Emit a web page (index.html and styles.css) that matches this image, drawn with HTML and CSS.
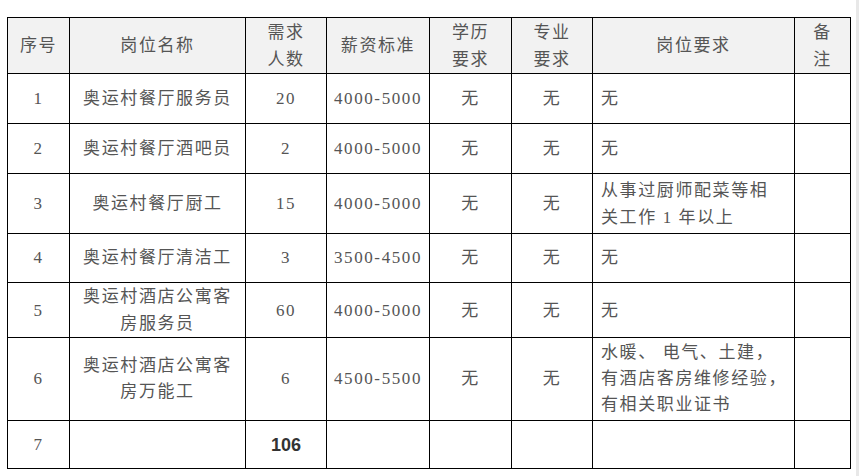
FILE: index.html
```html
<!DOCTYPE html>
<html lang="zh">
<head>
<meta charset="utf-8">
<link rel="stylesheet" href="styles.css">
</head>
<body>
<div class="page">
  <table class="jobs">
    <colgroup>
      <col class="c-no"><col class="c-name"><col class="c-num"><col class="c-pay"><col class="c-edu"><col class="c-major"><col class="c-req"><col class="c-note">
    </colgroup>
    <thead>
      <tr class="r-head">
        <th>序号</th>
        <th>岗位名称</th>
        <th>需求<br>人数</th>
        <th>薪资标准</th>
        <th>学历<br>要求</th>
        <th>专业<br>要求</th>
        <th>岗位要求</th>
        <th>备<br>注</th>
      </tr>
    </thead>
    <tbody>
      <tr class="r1">
        <td>1</td><td>奥运村餐厅服务员</td><td>20</td><td>4000-5000</td><td>无</td><td>无</td><td class="left">无</td><td></td>
      </tr>
      <tr class="r2">
        <td>2</td><td>奥运村餐厅酒吧员</td><td>2</td><td>4000-5000</td><td>无</td><td>无</td><td class="left">无</td><td></td>
      </tr>
      <tr class="r3">
        <td>3</td><td>奥运村餐厅厨工</td><td>15</td><td>4000-5000</td><td>无</td><td>无</td><td class="left">从事过厨师配菜等相<br>关工作 1 年以上</td><td></td>
      </tr>
      <tr class="r4">
        <td>4</td><td>奥运村餐厅清洁工</td><td>3</td><td>3500-4500</td><td>无</td><td>无</td><td class="left">无</td><td></td>
      </tr>
      <tr class="r5">
        <td>5</td><td>奥运村酒店公寓客<br>房服务员</td><td>60</td><td>4000-5000</td><td>无</td><td>无</td><td class="left">无</td><td></td>
      </tr>
      <tr class="r6">
        <td>6</td><td>奥运村酒店公寓客<br>房万能工</td><td>6</td><td>4500-5500</td><td>无</td><td>无</td><td class="left">水暖、 电气、土建，<br>有酒店客房维修经验，<br>有相关职业证书</td><td></td>
      </tr>
      <tr class="r7">
        <td>7</td><td></td><td class="total">106</td><td></td><td></td><td></td><td></td><td></td>
      </tr>
    </tbody>
  </table>
  <div class="edge"></div>
</div>
</body>
</html>
```

FILE: styles.css
```css
html, body {
  margin: 0;
  padding: 0;
  background: #ffffff;
}

.page {
  display: flex;
  align-items: flex-start;
  width: 860px;
  height: 476px;
  padding: 17px 0 0 7px;
  box-sizing: border-box;
}

.edge {
  width: 3px;
  height: 476px;
  margin-top: -17px;
  margin-left: 5px;
  background: #e8e8e8;
}

.jobs {
  border-collapse: collapse;
  table-layout: fixed;
  width: 844px;
  font-family: "Liberation Serif", "Noto Sans CJK SC", serif;
  font-size: 17px;
  line-height: 26px;
  color: #555555;
  letter-spacing: 1.6px;
}

.c-no { width: 62px; }
.c-name { width: 176px; }
.c-num { width: 81px; }
.c-pay { width: 103px; }
.c-edu { width: 82px; }
.c-major { width: 81px; }
.c-req { width: 202px; }
.c-note { width: 56px; }

.jobs th,
.jobs td {
  border: 1px solid #000000;
  padding: 0;
  text-align: center;
  vertical-align: middle;
  font-weight: normal;
  overflow: hidden;
  white-space: nowrap;
}

.jobs th {
  background: #f2f2f2;
  line-height: 27px;
}

.jobs td.left {
  text-align: left;
  padding-left: 8px;
}

.jobs td.total {
  font-family: "Liberation Sans", Arial, sans-serif;
  font-weight: bold;
  font-size: 18px;
  letter-spacing: 0;
  color: #333;
}

.r-head { height: 56px; }
.r1 { height: 50px; }
.r2 { height: 50px; }
.r3 { height: 60px; }
.r3 td.left { line-height: 27px; }
.r4 { height: 49px; }
.r5 { height: 54px; }
.r5 td { line-height: 27px; }
.r6 { height: 83px; }
.r7 { height: 48px; }
```
